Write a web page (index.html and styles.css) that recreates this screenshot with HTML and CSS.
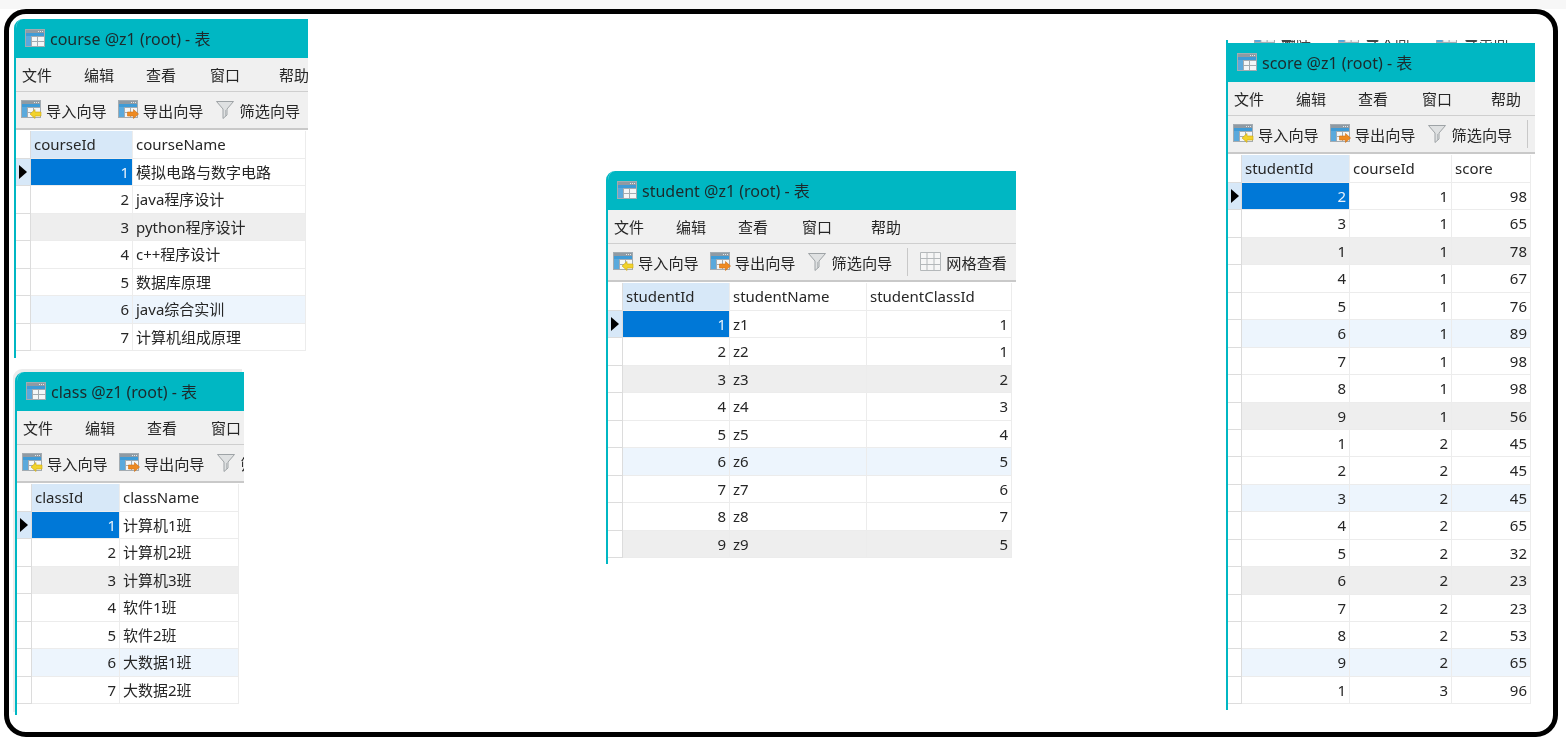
FILE: index.html
```html
<!DOCTYPE html>
<html lang="zh">
<head>
<meta charset="utf-8">
<title>Tables</title>
<link rel="stylesheet" href="styles.css">
</head>
<body>
<svg class="defs" width="0" height="0" aria-hidden="true">
  <symbol id="tbl" viewBox="0 0 20 18">
    <rect width="20" height="18" fill="#a3abb1"/>
    <rect x="1" y="1" width="18" height="3" fill="#8f9aa3"/>
    <rect x="13" y="2" width="1" height="1" fill="#e4e8ea"/><rect x="15" y="2" width="1" height="1" fill="#e4e8ea"/><rect x="17" y="2" width="1" height="1" fill="#e4e8ea"/>
    <rect x="1" y="4" width="18" height="3" fill="#3f9bd6"/>
    <rect x="1" y="7" width="5" height="10" fill="#5aa9dc"/>
    <rect x="7" y="8" width="5" height="4" fill="#f4f6f7"/><rect x="13" y="8" width="6" height="4" fill="#f4f6f7"/>
    <rect x="7" y="13" width="5" height="4" fill="#f4f6f7"/><rect x="13" y="13" width="6" height="4" fill="#f4f6f7"/>
  </symbol>
  <symbol id="imp" viewBox="0 0 21 19">
    <use href="#tbl" width="20" height="18"/>
    <path d="M9 14 14 9.500V12h6v4h-6v2.500z" fill="#f2d32c" stroke="#c9a512" stroke-width=".6"/>
  </symbol>
  <symbol id="exp" viewBox="0 0 21 19">
    <use href="#tbl" width="20" height="18"/>
    <path d="M20.500 14 15.500 9.500V12h-6v4h6v2.500z" fill="#ee8a22" stroke="#d06f10" stroke-width=".6"/>
  </symbol>
  <symbol id="fun" viewBox="0 0 18 18">
    <path d="M.5.500h17L11 8v6l-4 3.500V8z" fill="#dfe1e2" stroke="#9ea3a6"/>
    <path d="M9.500 9v6" stroke="#b8bcbe"/>
  </symbol>
  <symbol id="grd" viewBox="0 0 21 19">
    <path d="M.5.500h20v18H.5zM7 .5v18M14 .5v18M.5 6.500h20M.5 12.500h20" fill="#f6f6f6" stroke="#b4b8ba"/>
  </symbol>
</svg>

<main class="frame">

  <section class="win win-course">
    <header class="title"><svg class="ti"><use href="#tbl"/></svg><span>course @z1 (root) - 表</span></header>
    <nav class="menu"><span>文件</span><span>编辑</span><span>查看</span><span>窗口</span><span>帮助</span></nav>
    <div class="tools">
      <span class="tool"><svg class="ic"><use href="#imp"/></svg>导入向导</span>
      <span class="tool"><svg class="ic"><use href="#exp"/></svg>导出向导</span>
      <span class="tool tool-f"><svg class="if"><use href="#fun"/></svg>筛选向导</span>
    </div>
    <div class="grid">
      <div class="row head"><i></i><b class="on">courseId</b><b>courseName</b></div>
      <div class="row first"><i class="mark"></i><u class="sel">1</u><s>模拟电路与数字电路</s></div>
      <div class="row"><i></i><u>2</u><s>java程序设计</s></div>
      <div class="row gray"><i></i><u>3</u><s>python程序设计</s></div>
      <div class="row"><i></i><u>4</u><s>c++程序设计</s></div>
      <div class="row"><i></i><u>5</u><s>数据库原理</s></div>
      <div class="row blue"><i></i><u>6</u><s>java综合实训</s></div>
      <div class="row"><i></i><u>7</u><s>计算机组成原理</s></div>
    </div>
  </section>

  <section class="win win-class">
    <header class="title"><svg class="ti"><use href="#tbl"/></svg><span>class @z1 (root) - 表</span></header>
    <nav class="menu"><span>文件</span><span>编辑</span><span>查看</span><span>窗口</span><span>帮助</span></nav>
    <div class="tools">
      <span class="tool"><svg class="ic"><use href="#imp"/></svg>导入向导</span>
      <span class="tool"><svg class="ic"><use href="#exp"/></svg>导出向导</span>
      <span class="tool tool-f"><svg class="if"><use href="#fun"/></svg>筛选向导</span>
    </div>
    <div class="grid">
      <div class="row head"><i></i><b class="on">classId</b><b>className</b></div>
      <div class="row first"><i class="mark"></i><u class="sel">1</u><s>计算机1班</s></div>
      <div class="row"><i></i><u>2</u><s>计算机2班</s></div>
      <div class="row gray"><i></i><u>3</u><s>计算机3班</s></div>
      <div class="row"><i></i><u>4</u><s>软件1班</s></div>
      <div class="row"><i></i><u>5</u><s>软件2班</s></div>
      <div class="row blue"><i></i><u>6</u><s>大数据1班</s></div>
      <div class="row"><i></i><u>7</u><s>大数据2班</s></div>
    </div>
  </section>

  <section class="win win-student">
    <header class="title"><svg class="ti"><use href="#tbl"/></svg><span>student @z1 (root) - 表</span></header>
    <nav class="menu"><span>文件</span><span>编辑</span><span>查看</span><span>窗口</span><span>帮助</span></nav>
    <div class="tools">
      <span class="tool"><svg class="ic"><use href="#imp"/></svg>导入向导</span>
      <span class="tool"><svg class="ic"><use href="#exp"/></svg>导出向导</span>
      <span class="tool tool-f"><svg class="if"><use href="#fun"/></svg>筛选向导</span>
      <span class="sep"></span>
      <span class="tool"><svg class="ig"><use href="#grd"/></svg>网格查看</span>
      <span class="sep-end"></span>
    </div>
    <div class="grid">
      <div class="row head"><i></i><b class="on">studentId</b><b>studentName</b><b>studentClassId</b></div>
      <div class="row first"><i class="mark"></i><u class="sel">1</u><s>z1</s><u>1</u></div>
      <div class="row"><i></i><u>2</u><s>z2</s><u>1</u></div>
      <div class="row gray"><i></i><u>3</u><s>z3</s><u>2</u></div>
      <div class="row"><i></i><u>4</u><s>z4</s><u>3</u></div>
      <div class="row"><i></i><u>5</u><s>z5</s><u>4</u></div>
      <div class="row blue"><i></i><u>6</u><s>z6</s><u>5</u></div>
      <div class="row"><i></i><u>7</u><s>z7</s><u>6</u></div>
      <div class="row"><i></i><u>8</u><s>z8</s><u>7</u></div>
      <div class="row gray"><i></i><u>9</u><s>z9</s><u>5</u></div>
    </div>
  </section>

  <section class="win win-score">
    <div class="sliver"><svg class="ic"><use href="#tbl"/></svg><span>删除表</span><svg class="ic"><use href="#tbl"/></svg><span>导入向导</span><svg class="ic"><use href="#tbl"/></svg><span>导出向导</span></div>
    <header class="title"><svg class="ti"><use href="#tbl"/></svg><span>score @z1 (root) - 表</span></header>
    <nav class="menu"><span>文件</span><span>编辑</span><span>查看</span><span>窗口</span><span>帮助</span></nav>
    <div class="tools">
      <span class="tool"><svg class="ic"><use href="#imp"/></svg>导入向导</span>
      <span class="tool"><svg class="ic"><use href="#exp"/></svg>导出向导</span>
      <span class="tool tool-f"><svg class="if"><use href="#fun"/></svg>筛选向导</span>
      <span class="sep"></span>
    </div>
    <div class="grid">
      <div class="row head"><i></i><b class="on">studentId</b><b>courseId</b><b>score</b></div>
      <div class="row first"><i class="mark"></i><u class="sel">2</u><u>1</u><u>98</u></div>
      <div class="row"><i></i><u>3</u><u>1</u><u>65</u></div>
      <div class="row gray"><i></i><u>1</u><u>1</u><u>78</u></div>
      <div class="row"><i></i><u>4</u><u>1</u><u>67</u></div>
      <div class="row"><i></i><u>5</u><u>1</u><u>76</u></div>
      <div class="row blue"><i></i><u>6</u><u>1</u><u>89</u></div>
      <div class="row"><i></i><u>7</u><u>1</u><u>98</u></div>
      <div class="row"><i></i><u>8</u><u>1</u><u>98</u></div>
      <div class="row gray"><i></i><u>9</u><u>1</u><u>56</u></div>
      <div class="row"><i></i><u>1</u><u>2</u><u>45</u></div>
      <div class="row"><i></i><u>2</u><u>2</u><u>45</u></div>
      <div class="row blue"><i></i><u>3</u><u>2</u><u>45</u></div>
      <div class="row"><i></i><u>4</u><u>2</u><u>65</u></div>
      <div class="row"><i></i><u>5</u><u>2</u><u>32</u></div>
      <div class="row gray"><i></i><u>6</u><u>2</u><u>23</u></div>
      <div class="row"><i></i><u>7</u><u>2</u><u>23</u></div>
      <div class="row"><i></i><u>8</u><u>2</u><u>53</u></div>
      <div class="row blue"><i></i><u>9</u><u>2</u><u>65</u></div>
      <div class="row"><i></i><u>1</u><u>3</u><u>96</u></div>
    </div>
  </section>

</main>
</body>
</html>
```

FILE: styles.css
```css
* { box-sizing: border-box; }

html, body {
  margin: 0;
  height: 747px;
  overflow: hidden;
}

/* the page strip above the frame */
html { background: linear-gradient(#f7f7f7 9px, #fff 9px); }

body {
  font-family: "Noto Sans", "Noto Sans CJK SC", sans-serif;
  font-size: 15px;
  color: #262626;
}

.defs { position: absolute; }

.frame {
  position: absolute;
  left: 4px;
  top: 9px;
  width: 1554px;
  height: 728px;
  border: 5px solid #000;
  border-radius: 22px;
  background: #fff;
}

/* windows on the free canvas: offsets are relative to the frame's padding box */
.win {
  position: absolute;
  display: flex;
  flex-direction: column;
  overflow: hidden;
  background: #fff;
  border-left: 2px solid #00b7c3;
  border-radius: 9px 0 0 0;
  filter: blur(.3px);
}

.win-course  { left: 5px;    top: 5px;   width: 294px; height: 339px; --cols: 15px 102px 173px; }
.win-class   { left: 6px;    top: 358px; width: 229px; height: 343px; --cols: 15px 88px 119px; box-shadow: -2px -3px 0 #ececec; }
.win-student { left: 597px;  top: 157px; width: 410px; height: 393px; --cols: 15px 107px 137px 145px; }
.win-score   { left: 1217px; top: 26px;  width: 309px; height: 670px; --cols: 14px 108px 102px 79px; border-radius: 0; }

.sliver {
  flex: none;
  display: flex;
  align-items: flex-end;
  height: 3px;
  margin-left: -2px;
  padding-left: 28px;
  overflow: hidden;
  background: #fff;
  font-size: 15px;
  line-height: 1px;
  color: #444;
}

.sliver span { margin: 0 12px 0 7px; }

.title {
  flex: none;
  display: flex;
  align-items: center;
  height: 39px;
  margin-left: -2px;
  padding: 0 0 2px 11px;
  background: #00b7c3;
  font-size: 16px;
  color: #1c2a2c;
  white-space: nowrap;
}

.ti { width: 20px; height: 18px; margin-right: 5px; }

.menu {
  flex: none;
  display: grid;
  grid-template-columns: 62px 62px 64px 69px 30px;
  align-items: center;
  height: 34px;
  padding-left: 6px;
  background: #f0f0f0;
  border-bottom: 1px solid #cfcfcf;
  white-space: nowrap;
}

.tools {
  flex: none;
  display: flex;
  align-items: center;
  gap: 11px;
  height: 38px;
  padding: 0 0 1px 5px;
  background: #f0f0f0;
  border-bottom: 2px solid #c9c9c9;
  font-size: 15.2px;
  white-space: nowrap;
}

.tool { flex: none; display: flex; align-items: center; gap: 5px; }
.tool-f { gap: 6px; margin-left: 1px; }

.ic { flex: none; width: 21px; height: 19px; margin-right: -1px; }
.if { width: 18px; height: 18px; }
.ig { width: 21px; height: 19px; }

.sep {
  flex: none;
  width: 1px;
  height: 28px;
  margin: 0 1px 0 4px;
  background: #c8c8c8;
}

.sep-end { flex: none; width: 4px; height: 20px; background: #dcdcdc; }

.grid { flex: none; padding-top: 1px; }

.row {
  display: grid;
  grid-template-columns: var(--cols);
  justify-content: start;
  width: max-content;
  height: 27.45px;
  line-height: 26px;
}

.row.head { height: 28px; line-height: 27px; }

.row > * {
  display: block;
  padding: 0 3px;
  border-right: 1px solid #ececec;
  border-bottom: 1px solid #ececec;
  font-style: normal;
  font-weight: 400;
  text-decoration: none;
  white-space: nowrap;
  overflow: hidden;
}

.row > i { padding: 0; border-right: 1px solid #dcdcdc; border-bottom-color: #dcdcdc; background: #fff; }
.row > u { text-align: right; padding-right: 3px; }

.head > b { background: #fff; }
.head > b.on { background: #d7e8f8; }

.gray { background: #eeeeee; }
.blue { background: #edf5fd; }

.row > i.mark { position: relative; background: #d7e8f8; }
.mark::after {
  content: "";
  position: absolute;
  left: 3px;
  top: 6px;
  border-left: 8px solid #000;
  border-top: 7px solid transparent;
  border-bottom: 7px solid transparent;
}

.row > .sel { background: #0078d7; color: #e8f2fb; }
```
